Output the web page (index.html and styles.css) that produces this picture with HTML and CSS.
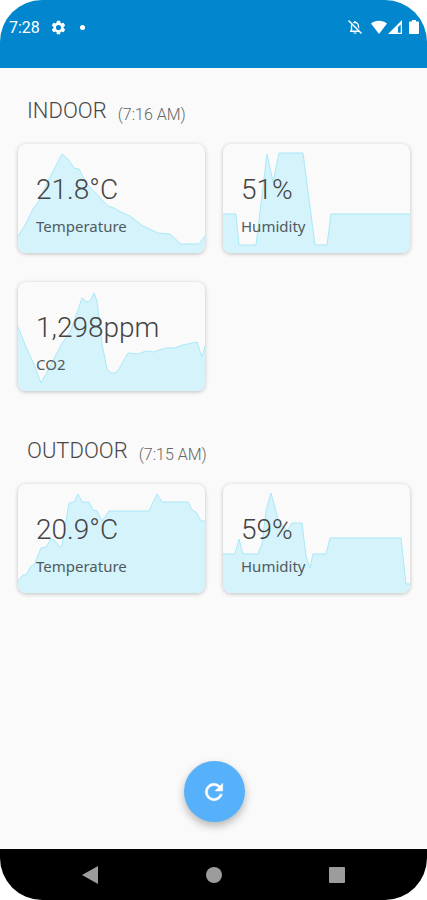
FILE: index.html
```html
<!DOCTYPE html>
<html lang="en">
<head>
  <meta charset="UTF-8">
  <meta name="viewport" content="width=device-width, initial-scale=1.0">
  <title>Indoor / Outdoor Climate</title>
  <link rel="stylesheet" href="styles.css">
</head>
<body>
  <div class="phone">
    <header class="status-bar">
      <div class="status-left">
        <span class="clock">7:28</span>
        <svg class="gear" viewBox="0 0 24 24" aria-hidden="true"><path fill="#fff" d="M19.14 12.94c.04-.3.06-.61.06-.94s-.02-.64-.07-.94l2.03-1.58a.5.5 0 0 0 .12-.61l-1.92-3.32a.49.49 0 0 0-.59-.22l-2.39.96a7 7 0 0 0-1.62-.94l-.36-2.54a.48.48 0 0 0-.48-.41h-3.84a.47.47 0 0 0-.47.41l-.36 2.54c-.59.24-1.13.57-1.62.94l-2.39-.96a.48.48 0 0 0-.59.22L2.74 8.87a.47.47 0 0 0 .12.61l2.03 1.58a6 6 0 0 0 0 1.88l-2.03 1.58a.5.5 0 0 0-.12.61l1.92 3.32c.12.22.37.29.59.22l2.39-.96c.5.38 1.03.7 1.62.94l.36 2.54c.05.24.24.41.48.41h3.84c.24 0 .44-.17.47-.41l.36-2.54a7 7 0 0 0 1.62-.94l2.39.96c.22.08.47 0 .59-.22l1.92-3.32a.47.47 0 0 0-.12-.61zM12 15.6a3.6 3.6 0 1 1 0-7.2 3.6 3.6 0 0 1 0 7.2z"/></svg>
        <span class="dot"></span>
      </div>
      <svg class="bell" viewBox="0 0 16 16" aria-hidden="true">
        <path fill="none" stroke="#fff" stroke-width="1.4" d="M4.5 12V7.5a3.5 4 0 0 1 7 0V12M3 12.2h10M8 2v2"/>
        <path fill="none" stroke="#fff" d="M6.5 14h3"/>
        <path stroke="#0286cd" stroke-width="1.4" d="M2.6 1L15 13.4"/>
        <path stroke="#fff" stroke-width="1.4" d="M1.5 1.5L14.5 14.5"/>
      </svg>
      <svg class="wifi" viewBox="0 0 16 14" aria-hidden="true"><path fill="#fff" d="M8 14L0 3.500C4.500-.3 11.500-.3 16 3.500z"/></svg>
      <svg class="signal" viewBox="0 0 14 14" aria-hidden="true"><path fill="#fff" fill-rule="evenodd" d="M14 0v14H0zM12.700 4.500L10 7.200V12.700H12.700z"/></svg>
      <svg class="battery" viewBox="0 0 10 14" aria-hidden="true"><path fill="#fff" d="M3 0h4v1.500h2q1 0 1 1V13q0 1-1 1H1q-1 0-1-1V2.500q0-1 1-1h2z"/></svg>
    </header>

    <main class="content">
      <section>
        <div class="heading">
          <h2>INDOOR</h2>
          <span class="time">(7:16 AM)</span>
        </div>
        <div class="cards">
          <article class="card">
            <svg class="chart" viewBox="0 0 187 109" preserveAspectRatio="none" aria-hidden="true"><path d="M-2 94L0 92 6 83 15 65 21 57 31 35 44 10 50 15 56 24 61 25 69 40 90 62 96 64 101 67 112 72 125 82 140 89 152 90 163 100 181 100 187 92 190 92V112H-2z"/></svg>
            <p class="value">21.8°C</p>
            <p class="name">Temperature</p>
          </article>
          <article class="card">
            <svg class="chart" viewBox="0 0 187 109" preserveAspectRatio="none" aria-hidden="true"><path d="M-2 70H13L16 101H33L44 10 50 38 56 9H80L92 101H104L108 70H190V112H-2z"/></svg>
            <p class="value">51%</p>
            <p class="name">Humidity</p>
          </article>
          <article class="card">
            <svg class="chart" viewBox="0 0 187 109" preserveAspectRatio="none" aria-hidden="true"><path d="M-2 41L0 45 8 65 16 82 23 101 28 92 43 63 53 48 64 16 69 20 72 19 76 11 79 19 84 62 89 87 93 91 97 91 101 87 110 71 120 72 128 69 135 70 148 66 156 66 165 63 179 60 184 75 187 64 190 60V112H-2z"/></svg>
            <p class="value">1,298ppm</p>
            <p class="name">CO2</p>
          </article>
        </div>
      </section>

      <section>
        <div class="heading">
          <h2>OUTDOOR</h2>
          <span class="time">(7:15 AM)</span>
        </div>
        <div class="cards">
          <article class="card">
            <svg class="chart" viewBox="0 0 187 109" preserveAspectRatio="none" aria-hidden="true"><path d="M-2 100L0 97 5 91 8 91 13 82 16 81 23 64 28 63 33 55 36 56 42 63 44 62 51 19 56 18 60 10 64 18 71 18 75 26 79 27 84 37 91 27H131L139 10 144 18H170L174 26 178 28 183 37H190V112H-2z"/></svg>
            <p class="value">20.9°C</p>
            <p class="name">Temperature</p>
          </article>
          <article class="card">
            <svg class="chart" viewBox="0 0 187 109" preserveAspectRatio="none" aria-hidden="true"><path d="M-2 70H12L16 55 20 70H35L39 60 43 27 48 9 55 35 64 47 69 39H79L83 72 87 84 90 70H103L107 54H178L183 100H190V112H-2z"/></svg>
            <p class="value">59%</p>
            <p class="name">Humidity</p>
          </article>
        </div>
      </section>

      <button class="refresh" type="button" aria-label="Refresh">
        <svg viewBox="0 0 24 24" aria-hidden="true"><path fill="#fff" stroke="#fff" stroke-width=".5" d="M17.650 6.350A7.960 7.960 0 0 0 12 4a8 8 0 1 0 7.730 10h-2.080A6 6 0 1 1 12 6c1.660 0 3.140.69 4.220 1.780L13 11h7V4z"/></svg>
      </button>
    </main>

    <nav class="nav-bar">
      <button type="button" aria-label="Back"><svg viewBox="0 0 18 18" aria-hidden="true"><path d="M16 0v18L0 9z"/></svg></button>
      <button type="button" aria-label="Home"><svg viewBox="0 0 18 18" aria-hidden="true"><circle cx="9" cy="9" r="8"/></svg></button>
      <button type="button" aria-label="Recent apps"><svg viewBox="0 0 18 18" aria-hidden="true"><rect x="1" y="1" width="16" height="16" rx="1"/></svg></button>
    </nav>
  </div>
</body>
</html>
```
FILE: styles.css
```css
* {
  box-sizing: border-box;
}

body {
  margin: 0;
  background: #fff;
  font-family: Roboto, 'Liberation Sans', sans-serif;
}

h2, p {
  margin: 0;
  font-weight: 300;
}

.phone {
  display: flex;
  flex-direction: column;
  min-height: 100vh;
  border-radius: 42px;
  overflow: hidden;
  background: #fafafa;
}

/* Status bar */
.status-bar {
  display: flex;
  align-items: center;
  height: 68px;
  padding: 0 8px 14px 9px;
  background: #0286cd;
  color: #fff;
}

.status-left {
  display: flex;
  align-items: center;
  margin-right: auto;
}

.clock {
  font-size: 16px;
  line-height: 20px;
  padding-top: 2px;
}

.gear {
  width: 17px;
  height: 17px;
  margin: 0 13px 0 10px;
}

.dot {
  width: 5px;
  height: 5px;
  border-radius: 50%;
  background: #fff;
}

.bell {
  width: 16px;
  height: 16px;
  margin-right: 8px;
}

.wifi {
  width: 16px;
  height: 14px;
  margin-right: 1px;
}

.signal {
  width: 14px;
  height: 14px;
  margin-right: 7px;
}

.battery {
  width: 10px;
  height: 14px;
}

/* Readings */
.content {
  flex: 1;
  display: flex;
  flex-direction: column;
  gap: 45px;
  padding: 28px 17px 27px 18px;
}

.heading {
  display: flex;
  align-items: flex-end;
  gap: 11px;
  padding-left: 9px;
  margin-bottom: 18px;
}

.heading h2 {
  font-size: 22px;
  line-height: 30px;
  color: #484848;
}

.time {
  font-size: 16px;
  font-weight: 300;
  line-height: 22px;
  color: #666;
}

.cards {
  display: grid;
  grid-template-columns: 1fr 1fr;
  gap: 29px 18px;
}

.card {
  position: relative;
  height: 109px;
  padding: 30px 18px 0;
  border-radius: 8px;
  overflow: hidden;
  background: #fafafa;
  box-shadow: 0 1px 4px rgba(0, 0, 0, 0.24);
}

.chart {
  position: absolute;
  inset: 0;
  width: 100%;
  height: 100%;
}

.chart path {
  fill: #d5f3fb;
  stroke: #a9e8f8;
  stroke-width: 1;
}

.value, .name {
  position: relative;
}

.value {
  font-size: 28px;
  line-height: 32px;
  color: #444;
}

.name {
  margin-top: 10px;
  font-family: 'Noto Sans', 'Open Sans', sans-serif;
  font-size: 15px;
  font-weight: 400;
  line-height: 20px;
  color: #505a5e;
}

.refresh {
  display: flex;
  align-items: center;
  justify-content: center;
  width: 61px;
  height: 61px;
  margin: auto auto 0;
  padding: 0;
  border: none;
  border-radius: 50%;
  background: #57b0fa;
  box-shadow: 0 4px 9px rgba(0, 0, 0, 0.28);
  cursor: pointer;
}

.refresh svg {
  width: 26px;
  height: 26px;
}

/* Navigation bar */
.nav-bar {
  display: flex;
  align-items: center;
  justify-content: center;
  gap: 75px;
  height: 51px;
  background: #000;
}

.nav-bar button {
  display: flex;
  align-items: center;
  justify-content: center;
  width: 48px;
  height: 48px;
  padding: 0;
  border: none;
  background: none;
  cursor: pointer;
}

.nav-bar svg {
  width: 18px;
  height: 18px;
  fill: #9c9c9c;
}
```
